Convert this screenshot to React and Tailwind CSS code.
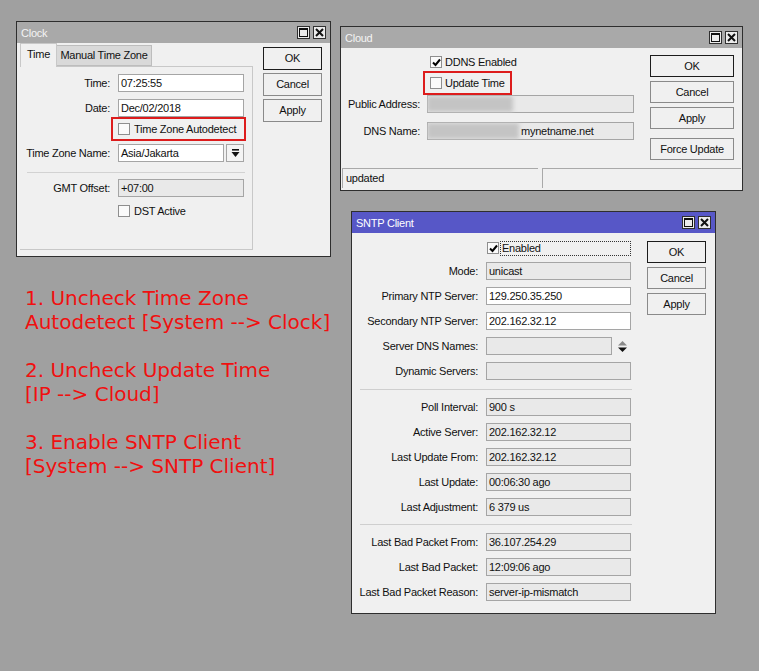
import React from "react";

const FONT = "font-['Liberation_Sans',Arial,sans-serif] tracking-[-0.25px]";

function TitleIcons() {
  return (
    <div className="flex gap-[3px]">
      <div className="w-[13px] h-[13px] border border-[#303030] bg-[#ececec] flex items-center justify-center">
        <svg width="9" height="9" viewBox="0 0 9 9">
          <rect x="0.5" y="0.5" width="8" height="8" fill="none" stroke="#111" strokeWidth="1" />
          <rect x="0.5" y="0.5" width="8" height="1.5" fill="#111" />
        </svg>
      </div>
      <div className="w-[13px] h-[13px] border border-[#303030] bg-[#ececec] flex items-center justify-center">
        <svg width="9" height="9" viewBox="0 0 9 9">
          <path d="M1 1 L8 8 M8 1 L1 8" stroke="#111" strokeWidth="2" />
        </svg>
      </div>
    </div>
  );
}

function Window({ title, active, className, children }) {
  return (
    <div className={`absolute flex flex-col border border-[#2e2e2e] bg-[#f0f0f0] text-[11px] text-[#111] ${FONT} ${className}`}>
      <div
        className={`h-[21px] shrink-0 flex items-center justify-between pl-[4px] pr-[4px] ${
          active ? "bg-[#5757c7] text-white" : "bg-[#a9a9a9] text-[#f4f4f4]"
        }`}
      >
        <span className="text-[11px] leading-none pt-[1px]">{title}</span>
        <TitleIcons />
      </div>
      {children}
    </div>
  );
}

function Box({ value, ro, w }) {
  return (
    <div
      className={`h-[18px] ${w} border border-[#a5a5a5] flex items-center pl-[2px] whitespace-nowrap overflow-hidden ${
        ro ? "bg-[#e9e9e9]" : "bg-white"
      }`}
    >
      {value}
    </div>
  );
}

function Check({ on }) {
  return (
    <div className="w-[12px] h-[12px] shrink-0 border border-[#8e8e8e] bg-[#fafafa] flex items-center justify-center">
      {on && (
        <svg width="9" height="9" viewBox="0 0 9 9">
          <path d="M1 4.5 L3.5 7 L8 1.5" fill="none" stroke="#000" strokeWidth="2" />
        </svg>
      )}
    </div>
  );
}

function Btn({ children, main, h = "h-[22px]" }) {
  return (
    <div
      className={`${h} w-full bg-[#f0f0f0] flex items-center justify-center border ${
        main ? "border-[#1c1c1c]" : "border-[#8a8a8a]"
      }`}
    >
      {children}
    </div>
  );
}

function Row({ label, lw, children, className = "" }) {
  return (
    <div className={`flex items-center ${className}`}>
      <div className={`${lw} text-right whitespace-nowrap pr-[1px]`}>{label}</div>
      {children}
    </div>
  );
}

function ClockWindow() {
  return (
    <Window title="Clock" className="left-[16px] top-[21px] w-[315px] h-[236px]">
      <div className="flex flex-1 pl-[3px]">
        {/* tabs */}
        <div className="w-[233px] flex flex-col">
          <div className="h-[23px] flex items-end">
            <div className="h-[24px] w-[37px] -mb-px relative z-10 border border-b-0 border-[#c8c8c8] bg-[#f0f0f0] flex items-center justify-center pb-[2px]">
              Time
            </div>
            <div className="h-[21px] w-[95px] border border-l-0 border-[#bdbdbd] bg-[#d9d9d9] flex items-center justify-center">
              Manual Time Zone
            </div>
          </div>
          <div className="h-[184px] border-t border-r border-b border-[#c8c8c8] flex flex-col pt-[7px]">
            <Row label="Time:" lw="w-[91px]">
              <div className="ml-[7px]">
                <Box value="07:25:55" w="w-[126px]" />
              </div>
            </Row>
            <Row label="Date:" lw="w-[91px]" className="mt-[7px]">
              <div className="ml-[7px]">
                <Box value="Dec/02/2018" w="w-[126px]" />
              </div>
            </Row>
            <div className="ml-[91px] w-[135px] h-[24px] border-2 border-[#dd1c1c] flex items-center gap-[4px] pl-[5px]">
              <Check />
              <span>Time Zone Autodetect</span>
            </div>
            <Row label="Time Zone Name:" lw="w-[91px]" className="mt-[3px]">
              <div className="ml-[7px] flex gap-[2px]">
                <Box value="Asia/Jakarta" w="w-[106px]" />
                <div className="w-[18px] h-[18px] border border-[#a5a5a5] bg-[#f4f4f4] flex items-center justify-center">
                  <svg width="9" height="9" viewBox="0 0 9 9">
                    <rect x="1" y="0" width="7" height="1.6" fill="#111" />
                    <path d="M0.5 3 L8.5 3 L4.5 8 Z" fill="#111" />
                  </svg>
                </div>
              </div>
            </Row>
            <div className="mt-[10px] ml-[7px] w-[218px] h-px bg-[#d2d2d2]" />
            <Row label="GMT Offset:" lw="w-[91px]" className="mt-[6px]">
              <div className="ml-[7px]">
                <Box value="+07:00" ro w="w-[126px]" />
              </div>
            </Row>
            <div className="mt-[8px] ml-[98px] flex items-center gap-[4px] h-[12px]">
              <Check />
              <span>DST Active</span>
            </div>
          </div>
        </div>
        {/* buttons */}
        <div className="ml-[10px] w-[59px] pt-[4px] flex flex-col gap-[3px]">
          <Btn main h="h-[23px]">OK</Btn>
          <Btn h="h-[23px]">Cancel</Btn>
          <Btn h="h-[23px]">Apply</Btn>
        </div>
      </div>
    </Window>
  );
}

function Blur({ w }) {
  return <div className={`absolute left-0 top-[1px] bottom-[1px] ${w} bg-[#c4c4c4] blur-[2px]`} />;
}

function CloudWindow() {
  return (
    <Window title="Cloud" className="left-[340px] top-[26px] w-[403px] h-[165px]">
      <div className="flex flex-1 flex-col">
        <div className="flex">
          <div className="w-[293px] flex flex-col pt-[7px]">
            <div className="h-[14px] flex items-center gap-[3px] pl-[89px]">
              <Check on />
              <span>DDNS Enabled</span>
            </div>
            <div className="mt-[2px] ml-[82px] w-[89px] h-[24px] border-2 border-[#dd1c1c] flex items-center gap-[3px] pl-[5px]">
              <Check />
              <span>Update Time</span>
            </div>
            <Row label="Public Address:" lw="w-[80px]">
              <div className="ml-[6px] relative overflow-hidden">
                <Box value="" ro w="w-[207px]" />
                <Blur w="w-[86px]" />
              </div>
            </Row>
            <Row label="DNS Name:" lw="w-[80px]" className="mt-[9px]">
              <div className="ml-[6px] relative overflow-hidden">
                <Box value={<span className="pl-[91px] relative z-10">mynetname.net</span>} ro w="w-[207px]" />
                <Blur w="w-[92px]" />
              </div>
            </Row>
          </div>
          <div className="ml-[16px] w-[84px] pt-[7px] flex flex-col gap-[4px]">
            <Btn main>OK</Btn>
            <Btn>Cancel</Btn>
            <Btn>Apply</Btn>
            <div className="mt-[5px]">
              <Btn>Force Update</Btn>
            </div>
          </div>
        </div>
        <div className="mt-auto mb-[2px] mx-[1px] h-[20px] flex gap-[4px]">
          <div className="w-[196px] border-t border-l border-[#a9a9a9] flex items-center pl-[3px]">updated</div>
          <div className="flex-1 border-t border-l border-[#a9a9a9]" />
        </div>
      </div>
    </Window>
  );
}

function SRow({ label, value, className = "mt-[7px]", ro = true }) {
  return (
    <Row label={label} lw="w-[127px]" className={className}>
      <div className="ml-[7px]">
        <Box value={value} ro={ro} w="w-[145px]" />
      </div>
    </Row>
  );
}

function SntpWindow() {
  return (
    <Window title="SNTP Client" active className="left-[351px] top-[211px] w-[365px] h-[403px]">
      <div className="flex flex-1">
        <div className="w-[279px] flex flex-col pt-[6px]">
          <div className="h-[18px] flex items-center pl-[135px]">
            <Check on />
            <div className="ml-[1px] w-[133px] h-[15px] border border-dotted border-[#333] flex items-center pl-[1px]">
              Enabled
            </div>
          </div>
          <SRow label="Mode:" value="unicast" className="mt-[5px]" />
          <SRow label="Primary NTP Server:" value="129.250.35.250" ro={false} />
          <SRow label="Secondary NTP Server:" value="202.162.32.12" ro={false} />
          <Row label="Server DNS Names:" lw="w-[127px]" className="mt-[7px]">
            <div className="ml-[7px] flex items-center gap-[5px]">
              <Box value="" ro w="w-[126px]" />
              <svg width="11" height="13" viewBox="0 0 11 13">
                <path d="M1 5.5 L5.5 1 L10 5.5 Z" fill="#8a8a8a" />
                <path d="M1 7.5 L10 7.5 L5.5 12 Z" fill="#111" />
              </svg>
            </div>
          </Row>
          <SRow label="Dynamic Servers:" value="" />
          <div className="mt-[9px] ml-[8px] w-[272px] h-px bg-[#cfcfcf]" />
          <SRow label="Poll Interval:" value="900 s" className="mt-[8px]" />
          <SRow label="Active Server:" value="202.162.32.12" />
          <SRow label="Last Update From:" value="202.162.32.12" />
          <SRow label="Last Update:" value="00:06:30 ago" />
          <SRow label="Last Adjustment:" value="6 379 us" />
          <div className="mt-[8px] ml-[8px] w-[272px] h-px bg-[#cfcfcf]" />
          <SRow label="Last Bad Packet From:" value="36.107.254.29" className="mt-[8px]" />
          <SRow label="Last Bad Packet:" value="12:09:06 ago" />
          <SRow label="Last Bad Packet Reason:" value="server-ip-mismatch" />
        </div>
        <div className="ml-[16px] w-[59px] pt-[8px] flex flex-col gap-[4px]">
          <Btn main>OK</Btn>
          <Btn>Cancel</Btn>
          <Btn>Apply</Btn>
        </div>
      </div>
    </Window>
  );
}

export default function App() {
  return (
    <div className="relative w-[759px] h-[671px] overflow-hidden bg-[#a0a0a0]">
      <ClockWindow />
      <CloudWindow />
      <SntpWindow />
      <div className="absolute left-[25px] top-[286px] text-[20px] leading-[24px] text-[#f01010] font-['DejaVu_Sans',sans-serif] whitespace-pre">
        {"1. Uncheck Time Zone\nAutodetect [System --> Clock]\n\n2. Uncheck Update Time\n[IP --> Cloud]\n\n3. Enable SNTP Client\n[System --> SNTP Client]"}
      </div>
    </div>
  );
}
